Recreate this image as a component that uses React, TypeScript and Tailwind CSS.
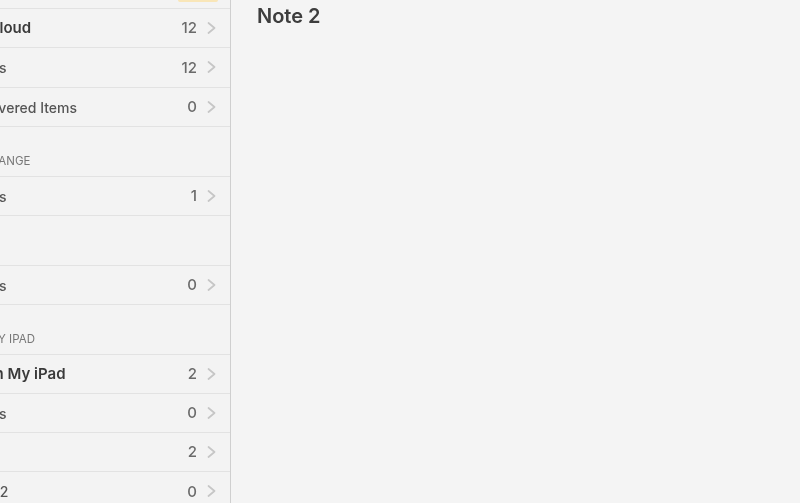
const font = { fontFamily: '"Inter", "Liberation Sans", sans-serif' };

function Row({ label, count, offset, bold }: { label: string; count: string; offset: string; bold?: boolean }) {
  return (
    <div className="flex h-[39.25px] items-center border-b border-[#e2e2e2] pr-[14px]">
      <span className={`${offset} mt-px flex-1 whitespace-nowrap ${bold ? "text-[15px] font-semibold text-[#3a3a3a]" : "text-[14px] font-medium text-[#555]"}`}>{label}</span>
      <span className="mr-[10px] mt-px text-[15px] font-medium text-[#6a6a6a]">{count}</span>
      <svg width="9" height="12" viewBox="0 0 9 12" fill="none" stroke="#c6c6c6" strokeWidth="1.7" strokeLinecap="round" strokeLinejoin="round">
        <path d="M1.5 1 7.5 6 1.5 11" />
      </svg>
    </div>
  );
}

function Header({ label, offset }: { label: string; offset: string }) {
  return (
    <div className="flex h-[49.75px] items-end border-b border-[#e2e2e2] pb-[8px]">
      <span className={`${offset} whitespace-nowrap text-[11.5px] leading-none text-[#777]`}>{label}</span>
    </div>
  );
}

export default function App() {
  return (
    <div style={font} className="flex h-[503px] w-[800px] overflow-hidden bg-[#f4f4f4] blur-[0.6px]">
      <aside className="h-full w-[231px] shrink-0 overflow-hidden border-r border-[#cfcfcf] bg-[#f3f3f3]">
        <div className="relative h-[9px] border-b border-[#e2e2e2]">
          <span className="absolute left-[178px] top-[-2px] h-[4px] w-[40px] rounded-full bg-[#f9e6b8]" />
        </div>
        <Row label="All iCloud" count="12" offset="-ml-[38px]" bold />
        <Row label="Notes" count="12" offset="-ml-[33px]" />
        <Row label="Recovered Items" count="0" offset="-ml-[35px]" />
        <Header label="EXCHANGE" offset="-ml-[33px]" />
        <Row label="Notes" count="1" offset="-ml-[33px]" />
        <Header label="GOOGLE" offset="-ml-[48px]" />
        <Row label="Notes" count="0" offset="-ml-[33px]" />
        <Header label="ON MY IPAD" offset="-ml-[33px]" />
        <Row label="On My iPad" count="2" offset="-ml-[17px]" bold />
        <Row label="Notes" count="0" offset="-ml-[33px]" />
        <Row label="" count="2" offset="" />
        <Row label="Note 2" count="0" offset="-ml-[36px]" />
      </aside>
      <main className="flex-1 pl-[26px] pt-[3px]">
        <h1 className="text-[20px] font-semibold leading-[26px] text-[#3d3d3d]">Note 2</h1>
      </main>
    </div>
  );
}
